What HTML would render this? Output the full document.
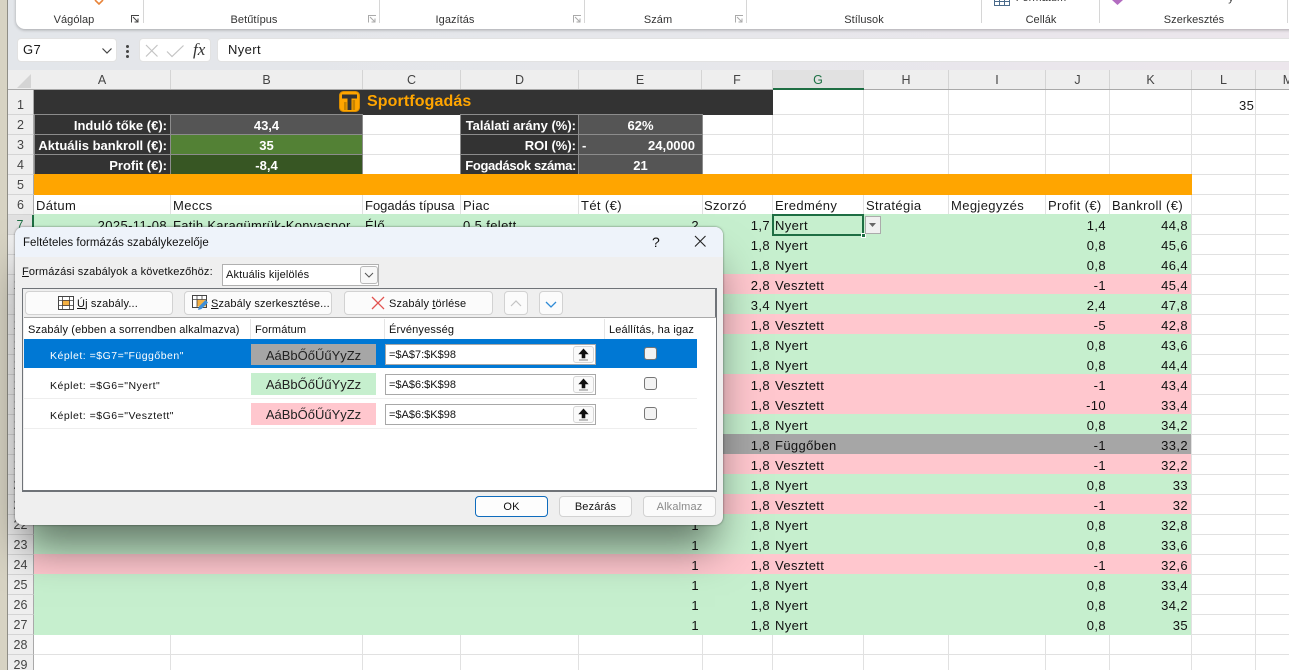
<!DOCTYPE html>
<html lang="hu"><head><meta charset="utf-8"><title>Excel</title>
<style>
*{box-sizing:border-box}
html,body{margin:0;padding:0;overflow:hidden}
body{width:1289px;height:670px;overflow:hidden;position:relative;background:#fff;font-family:"Liberation Sans",sans-serif;color:#111}
div,span.a{position:absolute}
.t{white-space:nowrap}
.band{left:0;top:0;width:1289px;height:70px;background:linear-gradient(90deg,#e3e6ea,#e6e7eb 50%,#ece6ec)}
.rib{left:16px;top:-20px;width:1290px;height:49px;background:#fff;border-radius:0 0 9px 9px;box-shadow:0 1px 3px rgba(0,0,0,.28)}
.sep{top:0;width:1px;height:23px;background:#d6d6d6}
.gl{top:13px;font-size:11px;letter-spacing:.05px;color:#333;white-space:nowrap;transform:translateX(-50%);line-height:15px}
.box{background:#fff;border-radius:4px;top:38px;height:24px;border:1px solid #e2e2e2}
.hdr{left:8px;top:70px;width:1281px;height:20px;background:#eeeeee;border-bottom:1px solid #a9a9a9}
.ch{top:70px;height:19px;line-height:20px;font-size:12.5px;text-align:center;color:#444;border-right:1px solid #d4d4d4}
.rh{left:8px;width:26px;height:20px;background:#eeeeee;border-bottom:1px solid #d4d4d4;border-right:1px solid #a9a9a9;font-size:12.5px;line-height:21px;text-align:center;color:#444}
.v{top:90px;width:1px;height:580px;background:#e1e1e1}
.h{left:34px;width:1255px;height:1px;background:#e1e1e1}
.c{font-size:13px;line-height:20px;white-space:nowrap;letter-spacing:.38px;color:#1a1a1a}
.row{left:34px;width:1157px;height:20px;font-size:13px;line-height:23px}
.g{background:#c6efce}.p{background:#ffc7ce}.k{background:#a6a6a6}
.row span{position:absolute;white-space:nowrap;letter-spacing:.38px}
.e{right:492px}.f{right:421px}.d{left:741px}.j{right:85px}.m{right:3px}
.lab{background:#333;color:#fff;font-weight:bold;font-size:13px;height:21px;line-height:21px;text-align:right;padding-right:3px;border:1px solid #8c8c8c;white-space:nowrap}
.lb2{padding-right:2px}
.val{color:#fff;font-weight:bold;font-size:13px;height:21px;line-height:21px;text-align:center;border:1px solid #8c8c8c}
.dlg{left:15px;top:227px;width:708px;height:298px;background:#efefef;border-radius:8px;box-shadow:0 30px 40px -8px rgba(0,0,0,.5),0 0 2px rgba(0,0,0,.5)}
.tx{font-size:11px;letter-spacing:.14px;white-space:nowrap;color:#111;line-height:16px}
.kp{font-size:10.5px;letter-spacing:.5px}
.btn{background:#fbfbfb;border:1px solid #d2d2d2;border-radius:4px}
.sw{left:236px;width:125px;height:22px;font-size:13px;line-height:23px;text-align:center;color:#222}
.inp{left:370px;width:211px;height:21px;background:#fff;border:1px solid #a8a8a8}
.inp .tx{left:3px;top:2px;letter-spacing:0}
.up{right:1px;top:1px;width:21px;height:17px;background:#fafafa;border:1px solid #d6d6d6;border-radius:3px}
.cb{left:629px;width:13px;height:13px;background:#f3f3f3;border:1px solid #767676;border-radius:3px}
u{text-underline-offset:1px}
</style></head><body>

<div class="band"></div>
<div style="left:0;top:0;width:7px;height:670px;background:#d7d3c3"></div>
<div style="left:7px;top:0;width:1px;height:670px;background:#8f8e86"></div>

<div class="rib">
 <div class="sep" style="left:127px;top:20px"></div><div class="sep" style="left:363px;top:20px"></div>
 <div class="sep" style="left:568px;top:20px"></div><div class="sep" style="left:730px;top:20px"></div>
 <div class="sep" style="left:965px;top:20px"></div><div class="sep" style="left:1083px;top:20px"></div>
 <div class="sep" style="left:1271px;top:20px"></div>
</div>
<svg style="position:absolute;left:94px;top:0" width="12" height="5"><path d="M1 0 L5 4 L9 0" fill="none" stroke="#e8843a" stroke-width="1.6"/></svg>
<div class="gl" style="left:74px">Vágólap</div>
<div class="gl" style="left:254px">Betűtípus</div>
<div class="gl" style="left:455px">Igazítás</div>
<div class="gl" style="left:658px">Szám</div>
<div class="gl" style="left:864px">Stílusok</div>
<div class="gl" style="left:1041px">Cellák</div>
<div class="gl" style="left:1194px">Szerkesztés</div>
<div class="gl" style="left:1041px;top:-9px">Formátum</div>
<div class="gl" style="left:1231px;top:-9px">y</div>
<svg style="position:absolute;left:131px;top:15px" width="10" height="9"><path d="M.5 7.5V.5H8M2 2l5 5M7 3.5V7H3.5" fill="none" stroke="#444"/></svg>
<svg style="position:absolute;left:368px;top:15px" width="10" height="9"><path d="M.5 7.5V.5H8M2 2l5 5M7 3.5V7H3.5" fill="none" stroke="#aaa"/></svg>
<svg style="position:absolute;left:573px;top:15px" width="10" height="9"><path d="M.5 7.5V.5H8M2 2l5 5M7 3.5V7H3.5" fill="none" stroke="#aaa"/></svg>
<svg style="position:absolute;left:735px;top:15px" width="10" height="9"><path d="M.5 7.5V.5H8M2 2l5 5M7 3.5V7H3.5" fill="none" stroke="#aaa"/></svg>
<svg style="position:absolute;left:994px;top:0" width="17" height="6"><path d="M.5 0V5.5H15.5V0M5.5 0V5.5M10.5 0V5.5M.5 1.5H15.5" fill="none" stroke="#4a6a8a"/></svg>
<svg style="position:absolute;left:1111px;top:0" width="14" height="6"><path d="M1 0H12L6.5 5z" fill="#b26cc0"/></svg>

<div class="box" style="left:17px;width:100px"></div>
<div class="c" style="left:23px;top:40px;font-size:13px">G7</div>
<svg style="position:absolute;left:101px;top:47px" width="12" height="8"><path d="M1.5 1.5 L6 6 L10.5 1.5" fill="none" stroke="#444" stroke-width="1.2"/></svg>
<div style="left:126px;top:45px;width:3px;height:3px;background:#444;border-radius:2px"></div>
<div style="left:126px;top:50px;width:3px;height:3px;background:#444;border-radius:2px"></div>
<div style="left:126px;top:55px;width:3px;height:3px;background:#444;border-radius:2px"></div>
<div class="box" style="left:139px;width:72px"></div>
<svg style="position:absolute;left:145px;top:44px" width="40" height="14"><path d="M1 1 L12.5 12.5 M12.5 1 L1 12.5" stroke="#c4c4c4" stroke-width="1.2"/><path d="M22 7.5 L27 12.5 L38.5 1.5" fill="none" stroke="#c4c4c4" stroke-width="1.2"/></svg>
<div class="t" style="left:193px;top:40px;font:italic 17px 'Liberation Serif',serif;line-height:20px;color:#333">fx</div>
<div class="box" style="left:217px;width:1090px"></div>
<div class="c" style="left:228px;top:40px">Nyert</div>

<div class="hdr"></div>
<svg style="position:absolute;left:17px;top:74px" width="14" height="14"><path d="M14 0V14H0z" fill="#d4d4d4"/></svg>
<div class="ch" style="left:34px;width:137px">A</div>
<div class="ch" style="left:171px;width:192px">B</div>
<div class="ch" style="left:363px;width:98px">C</div>
<div class="ch" style="left:461px;width:118px">D</div>
<div class="ch" style="left:579px;width:123px">E</div>
<div class="ch" style="left:702px;width:71px">F</div>
<div class="ch" style="left:773px;width:91px;background:#e1e1e1;color:#1e7145;height:18px">G</div>
<div style="left:773px;top:88px;width:91px;height:2px;background:#1e6e43"></div>
<div class="ch" style="left:864px;width:85px">H</div>
<div class="ch" style="left:949px;width:97px">I</div>
<div class="ch" style="left:1046px;width:64px">J</div>
<div class="ch" style="left:1110px;width:82px">K</div>
<div class="ch" style="left:1192px;width:64px">L</div>
<div class="ch" style="left:1256px;width:64px;border-right:0">M</div>

<div class="v" style="left:170px"></div><div class="v" style="left:362px"></div><div class="v" style="left:460px"></div>
<div class="v" style="left:578px"></div><div class="v" style="left:702px"></div><div class="v" style="left:772px"></div>
<div class="v" style="left:863px"></div><div class="v" style="left:948px"></div><div class="v" style="left:1045px"></div>
<div class="v" style="left:1109px"></div><div class="v" style="left:1191px"></div><div class="v" style="left:1255px"></div>
<div class="h" style="top:114px"></div><div class="h" style="top:134px"></div><div class="h" style="top:154px"></div><div class="h" style="top:174px"></div>
<div class="h" style="top:194px"></div><div class="h" style="top:214px"></div><div class="h" style="top:234px"></div><div class="h" style="top:254px"></div>
<div class="h" style="top:274px"></div><div class="h" style="top:294px"></div><div class="h" style="top:314px"></div><div class="h" style="top:334px"></div>
<div class="h" style="top:354px"></div><div class="h" style="top:374px"></div><div class="h" style="top:394px"></div><div class="h" style="top:414px"></div>
<div class="h" style="top:434px"></div><div class="h" style="top:454px"></div><div class="h" style="top:474px"></div><div class="h" style="top:494px"></div>
<div class="h" style="top:514px"></div><div class="h" style="top:534px"></div><div class="h" style="top:554px"></div><div class="h" style="top:574px"></div>
<div class="h" style="top:594px"></div><div class="h" style="top:614px"></div><div class="h" style="top:634px"></div><div class="h" style="top:654px"></div>

<div class="rh" style="top:90px;height:25px;line-height:31px">1</div>
<div class="rh" style="top:115px">2</div><div class="rh" style="top:135px">3</div><div class="rh" style="top:155px">4</div>
<div class="rh" style="top:175px">5</div><div class="rh" style="top:195px">6</div><div class="rh" style="top:215px;background:#e1e1e1;border-right:2px solid #1e6e43;color:#1e7145">7</div>
<div class="rh" style="top:235px">8</div><div class="rh" style="top:255px">9</div><div class="rh" style="top:275px">10</div>
<div class="rh" style="top:295px">11</div><div class="rh" style="top:315px">12</div><div class="rh" style="top:335px">13</div>
<div class="rh" style="top:355px">14</div><div class="rh" style="top:375px">15</div><div class="rh" style="top:395px">16</div>
<div class="rh" style="top:415px">17</div><div class="rh" style="top:435px">18</div><div class="rh" style="top:455px">19</div>
<div class="rh" style="top:475px">20</div><div class="rh" style="top:495px">21</div><div class="rh" style="top:515px">22</div>
<div class="rh" style="top:535px">23</div><div class="rh" style="top:555px">24</div><div class="rh" style="top:575px">25</div>
<div class="rh" style="top:595px">26</div><div class="rh" style="top:615px">27</div><div class="rh" style="top:635px">28</div><div class="rh" style="top:655px">29</div>

<!-- title -->
<div style="left:34px;top:90px;width:739px;height:25px;background:#333"></div>
<svg style="position:absolute;left:339px;top:91px" width="21" height="21"><rect x=".5" y=".5" width="20" height="20" rx="4" fill="#ffa500" stroke="#d98c00"/><path d="M3 3.5H18V7.5H12.5V19H8.5V7.5H3z" fill="#333"/><rect x="5" y="11" width="2.6" height="8" fill="#c98400"/><rect x="13.5" y="9" width="2.6" height="10" fill="#c98400"/></svg>
<div class="t" style="left:367px;top:91px;font-size:16px;font-weight:bold;color:#ffa500;line-height:21px;letter-spacing:.1px">Sportfogadás</div>

<div class="lab" style="left:34px;top:114px;width:137px">Induló tőke (€):</div>
<div class="val" style="left:170px;top:114px;width:193px;background:#555">43,4</div>
<div class="lab" style="left:34px;top:134px;width:137px">Aktuális bankroll (€):</div>
<div class="val" style="left:170px;top:134px;width:193px;background:#538135">35</div>
<div class="lab" style="left:34px;top:154px;width:137px">Profit (€):</div>
<div class="val" style="left:170px;top:154px;width:193px;background:#375623">-8,4</div>

<div class="lab lb2" style="left:460px;top:114px;width:119px">Találati arány (%):</div>
<div class="val" style="left:578px;top:114px;width:125px;background:#555">62%</div>
<div class="lab lb2" style="left:460px;top:134px;width:119px">ROI (%):</div>
<div class="val" style="left:578px;top:134px;width:125px;background:#555;text-align:right;padding-right:7px">24,0000<span class="a" style="left:3px;top:0">-</span></div>
<div class="lab lb2" style="left:460px;top:154px;width:119px;letter-spacing:-.35px">Fogadások száma:</div>
<div class="val" style="left:578px;top:154px;width:125px;background:#555">21</div>

<div style="left:34px;top:174px;width:1158px;height:21px;background:#ffa500"></div>

<div class="c" style="left:36px;top:195px;line-height:21px">Dátum</div>
<div class="c" style="left:173px;top:195px;line-height:21px">Meccs</div>
<div class="c" style="left:365px;top:195px;line-height:21px;letter-spacing:0">Fogadás típusa</div>
<div class="c" style="left:463px;top:195px;line-height:21px">Piac</div>
<div class="c" style="left:581px;top:195px;line-height:21px">Tét (€)</div>
<div class="c" style="left:704px;top:195px;line-height:21px">Szorzó</div>
<div class="c" style="left:775px;top:195px;line-height:21px">Eredmény</div>
<div class="c" style="left:866px;top:195px;line-height:21px">Stratégia</div>
<div class="c" style="left:951px;top:195px;line-height:21px">Megjegyzés</div>
<div class="c" style="left:1048px;top:195px;line-height:21px">Profit (€)</div>
<div class="c" style="left:1112px;top:195px;line-height:21px">Bankroll (€)</div>
<div class="c" style="left:1239px;top:95px;line-height:21px">35</div>

<div class="row g" style="top:214px"><span style="right:1024px">2025-11-08</span><span style="left:139px;letter-spacing:.3px">Fatih Karagümrük-Konyaspor</span><span style="left:331px">Élő</span><span style="left:429px">0,5 felett</span><span class="e">2</span><span class="f">1,7</span><span class="d">Nyert</span><span class="j">1,4</span><span class="m">44,8</span></div>
<div class="row g" style="top:234px"><span class="f">1,8</span><span class="d">Nyert</span><span class="j">0,8</span><span class="m">45,6</span></div>
<div class="row g" style="top:254px"><span class="f">1,8</span><span class="d">Nyert</span><span class="j">0,8</span><span class="m">46,4</span></div>
<div class="row p" style="top:274px"><span class="f">2,8</span><span class="d">Vesztett</span><span class="j">-1</span><span class="m">45,4</span></div>
<div class="row g" style="top:294px"><span class="f">3,4</span><span class="d">Nyert</span><span class="j">2,4</span><span class="m">47,8</span></div>
<div class="row p" style="top:314px"><span class="f">1,8</span><span class="d">Vesztett</span><span class="j">-5</span><span class="m">42,8</span></div>
<div class="row g" style="top:334px"><span class="f">1,8</span><span class="d">Nyert</span><span class="j">0,8</span><span class="m">43,6</span></div>
<div class="row g" style="top:354px"><span class="f">1,8</span><span class="d">Nyert</span><span class="j">0,8</span><span class="m">44,4</span></div>
<div class="row p" style="top:374px"><span class="f">1,8</span><span class="d">Vesztett</span><span class="j">-1</span><span class="m">43,4</span></div>
<div class="row p" style="top:394px"><span class="f">1,8</span><span class="d">Vesztett</span><span class="j">-10</span><span class="m">33,4</span></div>
<div class="row g" style="top:414px"><span class="f">1,8</span><span class="d">Nyert</span><span class="j">0,8</span><span class="m">34,2</span></div>
<div class="row k" style="top:434px"><span class="f">1,8</span><span class="d">Függőben</span><span class="j">-1</span><span class="m">33,2</span></div>
<div class="row p" style="top:454px"><span class="f">1,8</span><span class="d">Vesztett</span><span class="j">-1</span><span class="m">32,2</span></div>
<div class="row g" style="top:474px"><span class="f">1,8</span><span class="d">Nyert</span><span class="j">0,8</span><span class="m">33</span></div>
<div class="row p" style="top:494px"><span class="f">1,8</span><span class="d">Vesztett</span><span class="j">-1</span><span class="m">32</span></div>
<div class="row g" style="top:514px"><span class="e">1</span><span class="f">1,8</span><span class="d">Nyert</span><span class="j">0,8</span><span class="m">32,8</span></div>
<div class="row g" style="top:534px"><span class="e">1</span><span class="f">1,8</span><span class="d">Nyert</span><span class="j">0,8</span><span class="m">33,6</span></div>
<div class="row p" style="top:554px"><span class="e">1</span><span class="f">1,8</span><span class="d">Vesztett</span><span class="j">-1</span><span class="m">32,6</span></div>
<div class="row g" style="top:574px"><span class="e">1</span><span class="f">1,8</span><span class="d">Nyert</span><span class="j">0,8</span><span class="m">33,4</span></div>
<div class="row g" style="top:594px"><span class="e">1</span><span class="f">1,8</span><span class="d">Nyert</span><span class="j">0,8</span><span class="m">34,2</span></div>
<div class="row g" style="top:614px;height:21px"><span class="e">1</span><span class="f">1,8</span><span class="d">Nyert</span><span class="j">0,8</span><span class="m">35</span></div>

<!-- selection -->
<div style="left:772px;top:214px;width:92px;height:22px;border:2px solid #1e6e43"></div>
<div style="left:861px;top:233px;width:5px;height:5px;background:#1e6e43;border:1px solid #fff"></div>
<div style="left:865px;top:216px;width:16px;height:18px;background:#f0f0f0;border:1px solid #ababab"></div>
<svg style="position:absolute;left:868px;top:222px" width="10" height="6"><path d="M1 1H8L4.5 5z" fill="#666"/></svg>

<!-- dialog -->
<div class="dlg">
 <div style="left:0;top:0;width:708px;height:30px;background:#eef3fa;border-radius:8px 8px 0 0"></div>
 <div class="tx" style="left:8px;top:8px;font-size:11.5px;letter-spacing:.03px">Feltételes formázás szabálykezelője</div>
 <div class="t" style="left:637px;top:7px;font-size:14px;line-height:16px">?</div>
 <svg style="position:absolute;left:679px;top:8px" width="13" height="13"><path d="M1 1 L11.5 11.5 M11.5 1 L1 11.5" stroke="#222" stroke-width="1.1"/></svg>

 <div class="tx" style="left:7px;top:37px"><u>F</u>ormázási szabályok a következőhöz:</div>
 <div style="left:207px;top:37px;width:157px;height:22px;background:#fff;border:1px solid #b0b0b0"></div>
 <div class="tx" style="left:211px;top:40px">Aktuális kijelölés</div>
 <div style="left:345px;top:39px;width:18px;height:18px;background:#f8f8f8;border:1px solid #b8b8b8;border-radius:3px"></div>
 <svg style="position:absolute;left:349px;top:45px" width="10" height="7"><path d="M1 1 L5 5 L9 1" fill="none" stroke="#555"/></svg>

 <!-- inner frame -->
 <div style="left:7px;top:61px;width:695px;height:204px;border:1px solid #6f7378;border-bottom-width:2px;border-right-width:2px"></div>
 <div style="left:9px;top:90px;width:692px;height:173px;background:#fff;border-top:1px solid #aaa"></div>

 <div class="btn" style="left:10px;top:64px;width:148px;height:24px"></div>
 <svg style="position:absolute;left:43px;top:69px" width="16" height="14"><rect x=".5" y=".5" width="15" height="13" fill="#fff" stroke="#444"/><rect x="4.5" y="4.5" width="7" height="5" fill="#f4b042" stroke="#d9822b"/><path d="M.5 4.5H15.5M.5 9.5H15.5M4.5 .5V13.5M11.5 .5V13.5" fill="none" stroke="#444" stroke-width=".8"/></svg>
 <div class="tx" style="left:62px;top:69px"><u>Ú</u>j szabály...</div>

 <div class="btn" style="left:169px;top:64px;width:148px;height:24px"></div>
 <svg style="position:absolute;left:177px;top:68px" width="17" height="16"><rect x=".5" y=".5" width="14" height="12" fill="#fff" stroke="#444"/><rect x="5" y="4.5" width="9" height="7" fill="#f4b042"/><path d="M.5 4.5H14.5M5 .5V12.5M10 .5V4.5" fill="none" stroke="#444" stroke-width=".8"/><path d="M6 15 L7 11.5 L13.5 5 L16 7.5 L9.5 14z" fill="#3f8fd6"/></svg>
 <div class="tx" style="left:196px;top:69px"><u>S</u>zabály szerkesztése...</div>

 <div class="btn" style="left:329px;top:64px;width:149px;height:24px"></div>
 <svg style="position:absolute;left:356px;top:69px" width="14" height="14"><path d="M1 1 L13 13 M13 1 L1 13" stroke="#e2524f" stroke-width="1.3"/></svg>
 <div class="tx" style="left:374px;top:69px">Szabály <u>t</u>örlése</div>

 <div class="btn" style="left:489px;top:64px;width:24px;height:24px"></div>
 <svg style="position:absolute;left:495px;top:73px" width="12" height="7"><path d="M1 6 L6 1 L11 6" fill="none" stroke="#c4c4c4" stroke-width="1.2"/></svg>
 <div class="btn" style="left:524px;top:64px;width:24px;height:24px"></div>
 <svg style="position:absolute;left:530px;top:74px" width="12" height="7"><path d="M1 1 L6 6 L11 1" fill="none" stroke="#2f8bd6" stroke-width="1.3"/></svg>

 <div class="tx" style="left:13px;top:95px">Szabály (ebben a sorrendben alkalmazva)</div>
 <div style="left:235px;top:92px;width:1px;height:20px;background:#e5e5e5"></div>
 <div class="tx" style="left:240px;top:95px">Formátum</div>
 <div style="left:369px;top:92px;width:1px;height:20px;background:#e5e5e5"></div>
 <div class="tx" style="left:374px;top:95px">Érvényesség</div>
 <div style="left:589px;top:92px;width:1px;height:20px;background:#e5e5e5"></div>
 <div class="tx" style="left:594px;top:95px">Leállítás, ha igaz</div>

 <div style="left:9px;top:112px;width:673px;height:29px;background:#0078d4"></div>
 <div class="tx kp" style="left:35px;top:121px;color:#fff">Képlet: =$G7="Függőben"</div>
 <div class="sw" style="top:117px;height:21px;background:#a6a6a6">AáBbŐőŰűYyZz</div>
 <div class="inp" style="top:117px"><div class="tx">=$A$7:$K$98</div><div class="up"><svg width="19" height="15" style="display:block"><path d="M9.5 2 L14 7 H11 V11 H8 V7 H5z M5 13 H14" fill="#111" stroke="#111" stroke-width=".6"/></svg></div></div>
 <div class="cb" style="top:120px"></div>

 <div class="tx kp" style="left:35px;top:151px">Képlet: =$G6="Nyert"</div>
 <div class="sw" style="top:146px;background:#c6efce">AáBbŐőŰűYyZz</div>
 <div class="inp" style="top:147px"><div class="tx">=$A$6:$K$98</div><div class="up"><svg width="19" height="15" style="display:block"><path d="M9.5 2 L14 7 H11 V11 H8 V7 H5z M5 13 H14" fill="#111" stroke="#111" stroke-width=".6"/></svg></div></div>
 <div class="cb" style="top:150px"></div>
 <div style="left:9px;top:171px;width:673px;height:1px;background:#eee"></div>

 <div class="tx kp" style="left:35px;top:181px">Képlet: =$G6="Vesztett"</div>
 <div class="sw" style="top:176px;background:#ffc7ce">AáBbŐőŰűYyZz</div>
 <div class="inp" style="top:177px"><div class="tx">=$A$6:$K$98</div><div class="up"><svg width="19" height="15" style="display:block"><path d="M9.5 2 L14 7 H11 V11 H8 V7 H5z M5 13 H14" fill="#111" stroke="#111" stroke-width=".6"/></svg></div></div>
 <div class="cb" style="top:180px"></div>
 <div style="left:9px;top:201px;width:673px;height:1px;background:#eee"></div>

 <div class="btn" style="left:460px;top:269px;width:73px;height:21px;border:1.5px solid #0f6cbd;background:#fdfdfd"></div>
 <div class="tx" style="left:460px;top:272px;width:73px;text-align:center">OK</div>
 <div class="btn" style="left:544px;top:269px;width:73px;height:21px"></div>
 <div class="tx" style="left:544px;top:272px;width:73px;text-align:center">Bezárás</div>
 <div class="btn" style="left:628px;top:269px;width:73px;height:21px"></div>
 <div class="tx" style="left:628px;top:272px;width:73px;text-align:center;color:#8a8a8a">Alkalmaz</div>
</div>
</body></html>
